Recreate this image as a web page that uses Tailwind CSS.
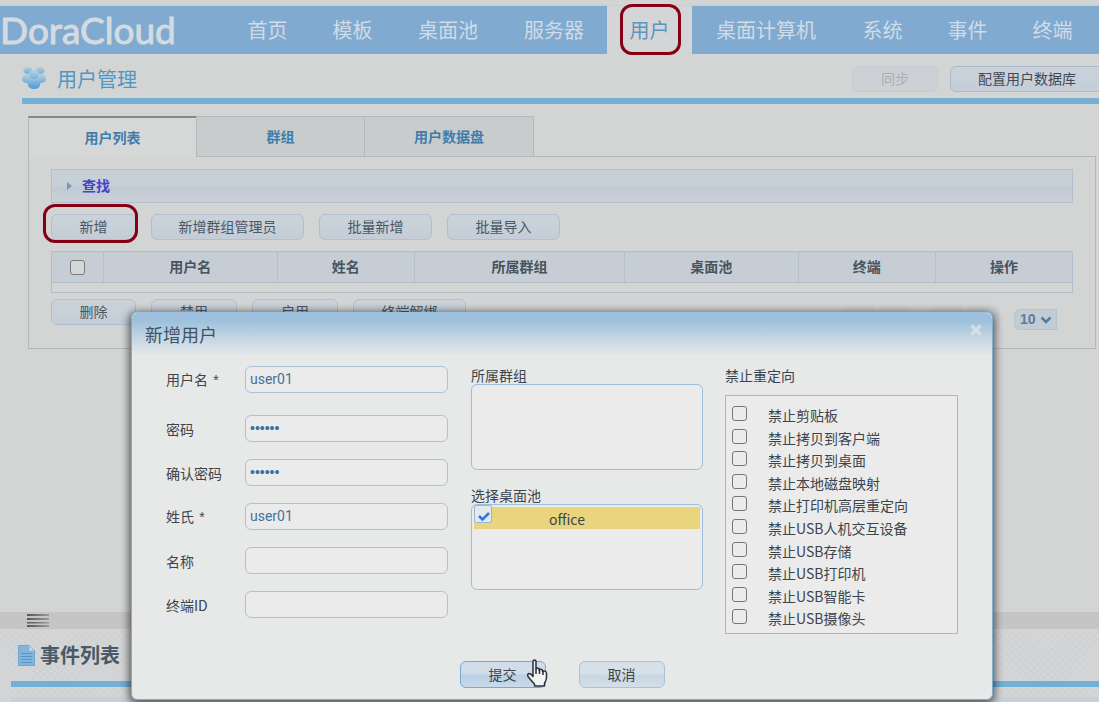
<!DOCTYPE html>
<html lang="zh-CN">
<head>
<meta charset="utf-8">
<title>DoraCloud - 用户管理</title>
<script src="https://cdn.jsdelivr.net/npm/@tailwindcss/browser@4"></script>
</head>
<body class="relative flex h-screen flex-col overflow-hidden bg-[#d3d5d5] font-['Noto_Sans_CJK_SC',sans-serif] text-[14px] leading-5 text-[#4a5866]">

<header class="mt-[5px] flex h-[49px] shrink-0 overflow-hidden border-t border-[#bcd2e4] bg-[#80aad0]">
  <a href="#" class="w-[225px] shrink-0 font-['Comic_Sans_MS','Lato',sans-serif] text-[37px] leading-[48px] text-[#d3dae0] [-webkit-text-stroke:1px_#d3dae0]">DoraCloud</a>
  <nav class="flex shrink-0 text-center text-[20px] leading-[48px] whitespace-nowrap text-[#d0dbe5]">
    <a href="#" class="w-[85px]">首页</a>
    <a href="#" class="w-[85px]">模板</a>
    <a href="#" class="w-[106px]">桌面池</a>
    <a href="#" class="w-[106px]">服务器</a>
    <a href="#" class="relative w-[85px] bg-[#d4d5d7] text-[#5c96bf]">用户</a>
    <a href="#" class="w-[148px]">桌面计算机</a>
    <a href="#" class="w-[85px]">系统</a>
    <a href="#" class="w-[85px]">事件</a>
    <a href="#" class="w-[85px]">终端</a>
  </nav>
</header>

<main class="min-h-0 flex-1 overflow-hidden">
  <div class="ml-[22px] flex h-[50px] items-center border-b-[6px] border-[#76b1d3]">
    <svg class="mt-1 h-6 w-6" viewBox="0 0 24 24">
      <defs>
        <linearGradient id="p" x1="0" y1="0" x2="0" y2="1"><stop offset="0" stop-color="#b5d2e4"/><stop offset="1" stop-color="#78acd5"/></linearGradient>
        <linearGradient id="q" x1="0" y1="0" x2="0" y2="1"><stop offset="0" stop-color="#92bfdf"/><stop offset="1" stop-color="#4e9bd6"/></linearGradient>
      </defs>
      <g fill="url(#p)"><ellipse cx="6" cy="4.500" rx="4.500" ry="3.800"/><ellipse cx="18" cy="4.500" rx="4.500" ry="3.800"/><path d="M0 14Q0 8 5 8T10 14Q9 17 5 17T0 14z"/><path d="M24 14Q24 8 19 8T14 14Q15 17 19 17T24 14z"/></g>
      <path d="M5.500 18q0-5 6.500-5t6.500 5q-1 5-6.500 5t-6.500-5z" fill="url(#q)"/><circle cx="12" cy="9" r="5" fill="url(#p)" stroke="#c3d6e2" stroke-width=".5"/>
    </svg>
    <h1 class="mt-1.5 ml-[11px] text-[20px] leading-7 text-[#4e97c6]">用户管理</h1>
    <div class="mt-1.5 -mr-[5px] ml-auto flex gap-3">
      <button disabled class="h-[26px] w-[86px] rounded-md border border-[#c5cbd2] bg-[#cdd1d5] pb-0.5 text-[#a9afb5]">同步</button>
      <button class="h-[26px] rounded-md border border-[#a9bccd] bg-linear-to-b from-[#cbd2da] to-[#c4cdd8] px-[27px] pb-0.5 text-[#3f4b58]">配置用户数据库</button>
    </div>
  </div>

  <div class="mt-3 mr-[3px] ml-7">
    <div class="flex text-[14px] font-bold text-[#417cab]">
      <button class="z-10 -mb-px h-[41px] w-[168px] border-t-2 border-l border-t-[#858789] border-l-[#b4b8ba] bg-[#d6d7d7] pb-0.5">用户列表</button>
      <button class="h-10 w-[169px] border border-b-0 border-[#b4b8ba] bg-[#c8cccd] pb-0.5">群组</button>
      <button class="h-10 w-[169px] border border-b-0 border-l-0 border-[#b4b8ba] bg-[#c8cccd] pb-0.5">用户数据盘</button>
    </div>
    <section class="border border-[#b4b8ba] px-[22px] pt-3 pb-4">
      <div class="flex h-[34px] items-center border border-[#b2c0cc] bg-linear-to-b from-[#c7cfd7] from-50% via-[#c1cad4] via-55% to-[#cad0d7] pl-[15px]">
        <svg class="h-2 w-[5px]" viewBox="0 0 5 8"><path d="M0 0L5 4L0 8z" fill="#6f9dba"/></svg>
        <a href="#" class="ml-2.5 pb-0.5 text-[14px] font-bold text-[#4345c8]">查找</a>
      </div>
      <div class="mt-[11px] flex gap-[15px]">
        <div class="relative">
          <button class="h-[26px] w-[85px] rounded-md border border-[#b0c0d0] bg-linear-to-b from-[#cbd2d9] to-[#c4cdd7] pb-0.5">新增</button>
          <span class="pointer-events-none absolute -top-2.5 -right-0.5 h-[39px] w-[95px] rounded-xl border-[3px] border-[#860015]"></span>
        </div>
        <button class="h-[26px] w-[153px] rounded-md border border-[#b0c0d0] bg-linear-to-b from-[#cbd2d9] to-[#c4cdd7] pb-0.5">新增群组管理员</button>
        <button class="h-[26px] w-[113px] rounded-md border border-[#b0c0d0] bg-linear-to-b from-[#cbd2d9] to-[#c4cdd7] pb-0.5">批量新增</button>
        <button class="h-[26px] w-[113px] rounded-md border border-[#b0c0d0] bg-linear-to-b from-[#cbd2d9] to-[#c4cdd7] pb-0.5">批量导入</button>
      </div>
      <table class="mt-[11px] w-full table-fixed border-collapse border border-[#b2bdc7]">
        <thead class="bg-[#c7cdd4] text-[14px] text-[#465361]">
          <tr class="h-[31px]">
            <th class="w-[52px] border border-[#b2c0cc]"><input type="checkbox" aria-label="全选" class="block mx-auto h-[15px] w-[15px] appearance-none rounded-[3px] border border-[#777b80] bg-[#d5d6d7]"></th>
            <th class="w-[17%] border border-[#b2c0cc] pb-0.5">用户名</th>
            <th class="border border-[#b2c0cc] pb-0.5">姓名</th>
            <th class="w-[20.6%] border border-[#b2c0cc] pb-0.5">所属群组</th>
            <th class="w-[17%] border border-[#b2c0cc] pb-0.5">桌面池</th>
            <th class="border border-[#b2c0cc] pb-0.5">终端</th>
            <th class="border border-[#b2c0cc] pb-0.5">操作</th>
          </tr>
        </thead>
        <tbody><tr class="h-2.5"><td colspan="7"></td></tr></tbody>
      </table>
      <div class="mt-1.5 flex items-start gap-[15px]">
        <button class="h-[26px] w-[85px] rounded-md border border-[#b0c0d0] bg-linear-to-b from-[#cbd2d9] to-[#c4cdd7] pb-0.5">删除</button>
        <button class="h-[26px] w-[86px] rounded-md border border-[#b0c0d0] bg-linear-to-b from-[#cbd2d9] to-[#c4cdd7] pb-0.5">禁用</button>
        <button class="h-[26px] w-[86px] rounded-md border border-[#b0c0d0] bg-linear-to-b from-[#cbd2d9] to-[#c4cdd7] pb-0.5">启用</button>
        <button class="h-[26px] w-[113px] rounded-md border border-[#b0c0d0] bg-linear-to-b from-[#cbd2d9] to-[#c4cdd7] pb-0.5">终端解绑</button>
        <div class="mt-[7px] mr-4 ml-auto flex items-center gap-0.5">
          <button aria-label="首页" class="h-[26px] w-[34px] rounded-md bg-[#cccfd2]"></button>
          <button aria-label="上一页" class="mr-4 h-[26px] w-[34px] rounded-md bg-[#cccfd2]"></button>
          <button aria-label="下一页" class="h-[26px] w-[34px] rounded-md bg-[#cccfd2]"></button>
          <button aria-label="末页" class="h-[26px] w-[34px] rounded-md bg-[#cccfd2]"></button>
          <div class="relative ml-3">
            <select aria-label="每页条数" class="block h-[21px] w-[43px] appearance-none rounded-l-md border border-[#b0c4d3] bg-[#c2ccd3] pl-[5px] font-['Liberation_Sans',sans-serif] text-[14px] font-bold leading-[19px] text-[#587da2]"><option>10</option></select>
            <svg class="pointer-events-none absolute top-[7px] right-[5px] h-2 w-3" viewBox="0 0 12 8" fill="none" stroke="#4f7ba5" stroke-width="2.500"><path d="M1.500 1.500L6 6L10.500 1.500"/></svg>
          </div>
        </div>
      </div>
    </section>
  </div>
</main>

<footer class="h-[90px] shrink-0 overflow-hidden bg-[#d4d5d6] bg-[repeating-linear-gradient(45deg,#00000005_0_1px,transparent_1px_5px),repeating-linear-gradient(-45deg,#00000005_0_1px,transparent_1px_5px)]">
  <div class="flex h-[17px] items-center bg-[#c5c5c5] pl-[27px]">
    <svg class="h-[13px] w-[22px]" viewBox="0 0 22 13"><defs><linearGradient id="grip"><stop offset="0" stop-color="#55585a"/><stop offset="1" stop-color="#9a9c9d"/></linearGradient></defs><path d="M0 0H22V2H0zM0 4H22V6H0zM0 8H22V9.500H0zM0 11H22V13H0z" fill="url(#grip)"/></svg>
  </div>
  <div class="ml-[11px] flex h-[58px] items-center border-b-[6px] border-[#72b0d7] pl-[7px]">
    <svg class="h-[21px] w-[17px]" viewBox="0 0 17 21"><path d="M.5.500H11L16.500 6V20.500H.5z" fill="#83b5db" stroke="#6da6d2"/><path d="M11 .5V6H16.500z" fill="#d5e2eb" stroke="#8fb6d4"/><path d="M3 8.500H14M3 11.500H14M3 14.500H14M3 17.500H14" stroke="#5695c7"/></svg>
    <h2 class="ml-[5px] text-[20px] font-bold leading-7 text-[#4b5966]">事件列表</h2>
  </div>
  <div class="mt-2.5 ml-[11px] h-5 bg-[#c8d0d9]"></div>
</footer>

<!-- Highlight around the current menu entry -->
<span class="pointer-events-none absolute top-1 left-[620px] h-[51px] w-[61px] rounded-xl border-[3px] border-[#860015]"></span>

<form role="dialog" aria-labelledby="dlg" class="absolute top-[312px] left-[131px] w-[862px] rounded-md border border-[#7fadcb] border-t-[#9dc0dc] bg-[#e7e9e9] pb-[11px] text-[#3d444b] shadow-[0_2px_9px_2px_rgba(0,0,0,0.6)]">
  <div class="flex h-[43px] items-center rounded-t-md bg-linear-to-b from-[#9bbfdc] from-15% via-[#c0d4e2] via-55% to-[#e7e9e9] pr-2.5 pb-0.5 pl-[13px]">
    <h2 id="dlg" class="text-[18px] leading-6 text-[#3f5365]">新增用户</h2>
    <button type="button" aria-label="关闭" class="mb-2 ml-auto"><svg class="h-3 w-3" viewBox="0 0 12 12" stroke="#d3dfe9" stroke-width="3.500"><path d="M1.500 1.500L10.500 10.500M10.500 1.500L1.500 10.500"/></svg></button>
  </div>
  <div class="flex items-start px-[34px] pt-2.5">
    <div class="grid grid-cols-[79px_203px] items-center gap-y-[17px]">
      <label for="u">用户名 <span class="ml-0.5 font-['Liberation_Sans']">*</span></label>
      <input id="u" value="user01" class="h-[27px] rounded-md border border-[#aac3da] bg-[#ebebeb] px-1 pb-0.5 font-['Roboto',sans-serif] text-[14px] text-[#467196]">
      <label for="p1" class="mt-[5px]">密码</label>
      <input id="p1" type="password" value="secret" class="mt-[5px] h-[27px] rounded-md border border-[#aac3da] bg-[#ebebeb] px-1 pb-0.5 font-['Liberation_Sans',sans-serif] text-[14px] text-[#34719f]">
      <label for="p2">确认密码</label>
      <input id="p2" type="password" value="secret" class="h-[27px] rounded-md border border-[#aac3da] bg-[#ebebeb] px-1 pb-0.5 font-['Liberation_Sans',sans-serif] text-[14px] text-[#34719f]">
      <label for="s">姓氏 <span class="ml-0.5 font-['Liberation_Sans']">*</span></label>
      <input id="s" value="user01" class="h-[27px] rounded-md border border-[#aac3da] bg-[#ebebeb] px-1 pb-0.5 font-['Roboto',sans-serif] text-[14px] text-[#467196]">
      <label for="n">名称</label>
      <input id="n" class="h-[27px] rounded-md border border-[#aac3da] bg-[#ebebeb] px-1">
      <label for="t">终端ID</label>
      <input id="t" class="h-[27px] rounded-md border border-[#aac3da] bg-[#ebebeb] px-1">
    </div>
    <div class="ml-[23px] w-[232px]">
      <h3 class="h-[18px] leading-[18px]">所属群组</h3>
      <div class="h-[86px] rounded-md border border-[#9fbdd6] bg-[#ebebeb]"></div>
      <h3 class="mt-4 h-[18px] leading-[18px]">选择桌面池</h3>
      <div class="h-[86px] rounded-md border border-[#9fbdd6] bg-[#ebebeb] px-0.5 pt-0.5">
        <div class="relative flex h-[22px] items-center bg-[#e8d57e]">
          <input id="office" type="checkbox" checked class="absolute -top-0.5 left-0 h-[18px] w-[18px] appearance-none rounded-xs border border-[#94b9d8] bg-[#e3e9ed]">
          <svg class="pointer-events-none absolute top-1 left-1 h-[11px] w-3" viewBox="0 0 12 11" fill="none" stroke="#2e7bd6" stroke-width="2.500"><path d="M1 5L4.500 8.500L11 2"/></svg>
          <label for="office" class="pt-0.5 pl-[75px]">office</label>
        </div>
      </div>
    </div>
    <fieldset class="ml-[22px] w-[233px]">
      <legend class="h-[29px] leading-[18px]">禁止重定向</legend>
      <div class="grid h-[239px] grid-rows-10 border border-[#b3b6b8] bg-[#ebebeb] pt-2.5 pb-px pl-1.5 leading-[18px]">
        <label class="flex h-5 items-start gap-[21px]"><input type="checkbox" class="h-[15px] w-[15px] appearance-none rounded-[3px] border border-[#74787c]">禁止剪贴板</label>
        <label class="flex h-5 items-start gap-[21px]"><input type="checkbox" class="h-[15px] w-[15px] appearance-none rounded-[3px] border border-[#74787c]">禁止拷贝到客户端</label>
        <label class="flex h-5 items-start gap-[21px]"><input type="checkbox" class="h-[15px] w-[15px] appearance-none rounded-[3px] border border-[#74787c]">禁止拷贝到桌面</label>
        <label class="flex h-5 items-start gap-[21px]"><input type="checkbox" class="h-[15px] w-[15px] appearance-none rounded-[3px] border border-[#74787c]">禁止本地磁盘映射</label>
        <label class="flex h-5 items-start gap-[21px]"><input type="checkbox" class="h-[15px] w-[15px] appearance-none rounded-[3px] border border-[#74787c]">禁止打印机高层重定向</label>
        <label class="flex h-5 items-start gap-[21px]"><input type="checkbox" class="h-[15px] w-[15px] appearance-none rounded-[3px] border border-[#74787c]">禁止USB人机交互设备</label>
        <label class="flex h-5 items-start gap-[21px]"><input type="checkbox" class="h-[15px] w-[15px] appearance-none rounded-[3px] border border-[#74787c]">禁止USB存储</label>
        <label class="flex h-5 items-start gap-[21px]"><input type="checkbox" class="h-[15px] w-[15px] appearance-none rounded-[3px] border border-[#74787c]">禁止USB打印机</label>
        <label class="flex h-5 items-start gap-[21px]"><input type="checkbox" class="h-[15px] w-[15px] appearance-none rounded-[3px] border border-[#74787c]">禁止USB智能卡</label>
        <label class="flex h-5 items-start gap-[21px]"><input type="checkbox" class="h-[15px] w-[15px] appearance-none rounded-[3px] border border-[#74787c]">禁止USB摄像头</label>
      </div>
    </fieldset>
  </div>
  <div class="mt-[27px] flex justify-center gap-[33px]">
    <div class="relative">
      <button type="submit" class="block h-[27px] w-[86px] rounded-md border border-[#74a9d2] bg-linear-to-b from-[#d1deea] from-45% via-[#b9d0e4] via-55% to-[#c9dbe9] pb-0.5">提交</button>
      <svg class="pointer-events-none absolute -top-0.5 -right-0.5 h-7 w-[22px]" viewBox="0 0 22 28"><path d="M7 2.500Q7 1 8.500 1T10 2.500V10Q11 8.500 13 9.500V11Q14.500 9.500 16.500 11V12.500Q20 11 20.500 14V19Q20 22 18.500 24V27H8.500V25Q5 21.500 2 17.500Q1 15 3 14.500Q5 14.500 7 17.500z" fill="#f2f3f4" stroke="#28313a" stroke-width="1.500" stroke-linejoin="round"/><path d="M10 9.500V15M13.500 10.500V15M17 12V16" stroke="#28313a" stroke-width="1.500"/></svg>
    </div>
    <button type="button" class="h-[27px] w-[86px] rounded-md border border-[#a9c2d9] bg-linear-to-b from-[#d6e0e9] from-45% via-[#c8d6e3] via-55% to-[#d3dee8] pb-0.5">取消</button>
  </div>
</form>
</body>
</html>
